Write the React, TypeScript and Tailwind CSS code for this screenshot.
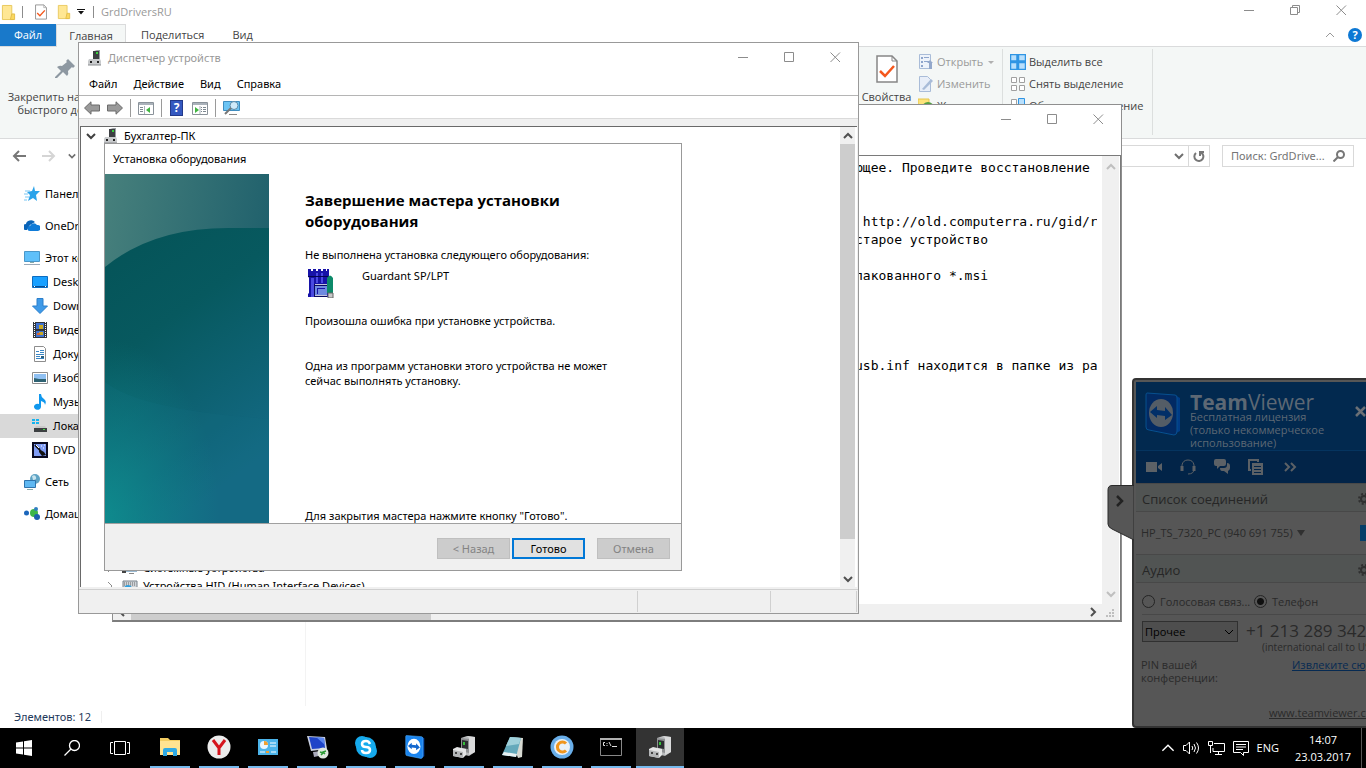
import React, { useState } from "react";

type IconProps = { className?: string };

function Folder({ className = "w-4 h-4" }: IconProps) {
  return (
    <svg viewBox="0 0 16 18" className={className}>
      <path d="M1.5 1.5h10v13l2 2h-12z" fill="#ffe794" stroke="#e8c75a" />
      <path d="M11.5 10.5h3v6h-4.5z" fill="#fbd85f" stroke="#e2bd4a" />
    </svg>
  );
}

function CheckedPage({ className = "w-3 h-4" }: IconProps) {
  return (
    <svg viewBox="0 0 22 28" className={className} fill="none">
      <path d="M1 1h15l5 5v21H1z" fill="#fff" stroke="#868686" strokeWidth="1.5" />
      <path d="M16 1v5h5" stroke="#868686" />
      <path d="M4 16l5 5 9-10" stroke="#f4571c" strokeWidth="2.5" />
    </svg>
  );
}

function Device({ className = "w-4 h-4" }: IconProps) {
  return (
    <svg viewBox="0 0 16 16" className={className}>
      <path d="M6 1h6v9H6z" fill="#3c3f42" />
      <path d="M10 0h3v10h-1V1H7z" fill="#9b9fa3" />
      <path d="M9 2h2v2H9z" fill="#37d23c" />
      <path d="M2 9h11l1 2v4H1v-4z" fill="#c9cbcd" />
      <path d="M1 15h13" stroke="#8a8d90" />
      <path d="M3 11h2v2H3zM10 11h2v2h-2z" fill="#222" />
    </svg>
  );
}

function BigDevice({ className = "w-6 h-6" }: IconProps) {
  return (
    <svg viewBox="0 0 24 24" className={className}>
      <path d="M9 3l6-2 8 1v15l-6 4-8-2z" fill="#b9bbbd" />
      <path d="M15 1l8 1v15l-6 3V3z" fill="#d9dadb" />
      <path d="M9 3l8 1v14l-8-2z" fill="#8f9193" />
      <path d="M10 5l6 1v8l-6-1z" fill="#2c2f31" />
      <path d="M11 7h2v3h-2z" fill="#35c13a" />
      <path d="M1 14l4-2 9 2v6l-3 3-10-2z" fill="#e4e5e6" />
      <path d="M1 15l10 2v6L1 21z" fill="#b4b6b8" />
      <path d="M3 17h2v2H3zM8 18h2v2H8z" fill="#444" />
    </svg>
  );
}

function TeamViewerLogo({ className = "w-6 h-6", dim = false }: IconProps & { dim?: boolean }) {
  return (
    <svg viewBox="0 0 36 44" className={className}>
      <path d="M30 3l5 3v33l-7 4z" fill={dim ? "#013c86" : "#0b4fae"} />
      <path d="M2 1l28 2q2 0 2 3v33q0 4-3 4L4 38q-3 0-3-3V3q0-2 1-2z" fill={dim ? "#022a63" : "#1a84ee"} stroke={dim ? "#07508f" : "#53b2ff"} />
      <ellipse cx="16" cy="21" rx="12" ry="14" fill={dim ? "#545d66" : "#fff"} />
      <path d="M5 20l7-6v4l8 1v-4l7 8-7 5v-4l-8-1v3z" fill={dim ? "#022f68" : "#1267cf"} />
    </svg>
  );
}

function Chevron({ dir, className = "w-[10px] h-[10px]", stroke = 2 }: IconProps & { dir: "up" | "down" | "left" | "right"; stroke?: number }) {
  const d = { up: "M1 7l4-4 4 4", down: "M1 3l4 4 4-4", left: "M7 1L3 5l4 4", right: "M3 1l4 4-4 4" }[dir];
  return (
    <svg viewBox="0 0 10 10" className={`shrink-0 ${className}`} fill="none" stroke="currentColor" strokeWidth={stroke}>
      <path d={d} />
    </svg>
  );
}

function WindowButtons({ restore = false, height = "h-7" }: { restore?: boolean; height?: string }) {
  const shapes = [
    { label: "Свернуть", d: "M0 5.5h10" },
    { label: "Развернуть", d: restore ? "M0.5 2.5h7v7h-7zM2.5 2.5v-2h7v7h-2" : "M0.5 0.5h9v9h-9z" },
    { label: "Закрыть", d: "M0.5 0.5l9.5 9.5M10 0.5L0.5 10" },
  ];
  return (
    <div className="flex ml-auto self-start text-[#8c8c8c]">
      {shapes.map((s) => (
        <button key={s.label} aria-label={s.label} className={`w-[46px] ${height} flex items-center justify-center`}>
          <svg viewBox="0 0 11 11" className="w-[11px] h-[11px]" fill="none" stroke="currentColor">
            <path d={s.d} />
          </svg>
        </button>
      ))}
    </div>
  );
}

/* ---------- explorer ---------- */

const sideIcons: Record<string, React.ReactNode> = {
  star: (
    <>
      <path d="M10 0l1 5h5l-4 4 1 6-4-3-5 3 2-6-3-3 5-1z" fill="#2aa3ea" />
      <path d="M1 5h5M0 8h4M1 11h4M0 14h3" stroke="#79c6f3" />
    </>
  ),
  cloud: (
    <>
      <path d="M2 12a3 3 0 010-6 5 4 0 019-2l-5 3-3 5z" fill="#0a64b8" />
      <path d="M6 13a2.5 2.5 0 010-5 4 4 0 017-1 3 3 0 011 6z" fill="#0f7bd8" />
    </>
  ),
  pc: (
    <>
      <path d="M0.5 1.5h15v10H.5z" fill="#5fc0fa" stroke="#4a97c9" />
      <path d="M6 12h4v1H6z" fill="#8aa" />
      <path d="M0 14.5h16" stroke="#9aa9b8" />
    </>
  ),
  desktop: (
    <>
      <path d="M0.5 2.5h15v11H.5z" fill="#19a0ff" stroke="#0c6cc0" />
      <path d="M1 12.5h14" stroke="#0a4d91" />
      <path d="M2 12.5h1M13 12.5h1" stroke="#fff" />
    </>
  ),
  down: <path d="M5 0.5h6V8h4.5L8 15.5.5 8H5z" fill="#3f9ae8" stroke="#2b7fcb" />,
  video: (
    <>
      <path d="M1 0h14v16H1z" fill="#32363c" />
      <path d="M4 1h8v6H4zM4 9h8v6H4z" fill="#3f72d0" />
      <path d="M7 3h4v4H7zM7 10h4v3H7z" fill="#c9a921" />
      <path d="M5 11h3v2H5z" fill="#d8662b" />
      <path d="M2.5 0v16M13.5 0v16" stroke="#fff" strokeDasharray="1 1" />
    </>
  ),
  doc: (
    <>
      <path d="M2.5.5h9l2 2v13h-11z" fill="#fff" stroke="#8d8d8d" />
      <path d="M4 5.5h3M8 4.5h4M8 6.5h4M4 8.5h8M4 10.5h4M4 12.5h8" stroke="#3a86c4" />
      <path d="M9 10h3v2H9z" fill="#2b5f7e" />
    </>
  ),
  image: (
    <>
      <path d="M.5 2.5h15v11H.5z" fill="#fff" stroke="#8d8d8d" />
      <path d="M2 4h12v8H2z" fill="#8fc0f2" />
      <path d="M2 8l5 1 7 0v3H2z" fill="#2e6272" />
    </>
  ),
  music: <path d="M7 0h2q0 3 3 5t1 6q0-3-4-4v6a3.5 3 0 11-2-3z" fill="#1098ee" />,
  disk: (
    <>
      <path d="M0 1h3v2H0zM4 1h3v2H4zM0 4h3v2H0zM4 4h3v2H4z" fill="#16b3ee" />
      <path d="M4 8h9l2 3H2z" fill="#c9c9c9" />
      <path d="M2 10h13v4H2z" fill="#3d4042" />
      <path d="M11 11h2v1h-2z" fill="#46e04a" />
    </>
  ),
  dvd: (
    <>
      <path d="M1 1h14v14H1z" fill="#7f9cf5" stroke="#0a0a20" strokeWidth="2" />
      <path d="M3 3l5 5" stroke="#111" strokeWidth="2" />
      <path d="M7 7l5 3 2 3-4 1-3-4z" fill="#111" />
      <path d="M4 3l3 3M9 4h1M12 3h1M11 6h1" stroke="#fff" />
    </>
  ),
  net: (
    <>
      <circle cx="11" cy="5" r="5" fill="#5fa3c4" />
      <path d="M8 2q3-2 4 1t-3 3z" fill="#c7e4ee" />
      <path d="M.5 6.5h11v7H.5z" fill="#5fb8f2" stroke="#2f74ac" />
      <path d="M3 15.5h6" stroke="#8aa" />
    </>
  ),
  home: (
    <>
      <circle cx="2.5" cy="7" r="2.5" fill="#1c66bb" />
      <circle cx="10" cy="7" r="4" fill="#3db54a" />
      <circle cx="12" cy="3" r="2" fill="#2f7fc0" />
      <circle cx="13" cy="11" r="3" fill="#1c5fae" />
    </>
  ),
};

type SideItem = { icon: string; label: string; nested?: boolean; active?: boolean };

const sideGroups: SideItem[][] = [
  [{ icon: "star", label: "Панель быстрого доступа" }],
  [{ icon: "cloud", label: "OneDrive" }],
  [
    { icon: "pc", label: "Этот компьютер" },
    { icon: "desktop", label: "Desktop", nested: true },
    { icon: "down", label: "Downloads", nested: true },
    { icon: "video", label: "Видео", nested: true },
    { icon: "doc", label: "Документы", nested: true },
    { icon: "image", label: "Изображения", nested: true },
    { icon: "music", label: "Музыка", nested: true },
    { icon: "disk", label: "Локальный диск", nested: true, active: true },
    { icon: "dvd", label: "DVD RW дисковод", nested: true },
  ],
  [{ icon: "net", label: "Сеть" }],
  [{ icon: "home", label: "Домашняя группа" }],
];

function RibbonRow({ icon, label, muted = false, caret = false }: { icon: React.ReactNode; label: string; muted?: boolean; caret?: boolean }) {
  return (
    <button className={`flex items-center gap-[3px] h-[22px] whitespace-nowrap ${muted ? "text-[#9a9a9a]" : "text-[#444]"}`}>
      <svg viewBox="0 0 16 16" className="w-4 h-4 shrink-0" fill="none">
        {icon}
      </svg>
      {label}
      {caret && <span className="ml-0.5 border-x-[3px] border-x-transparent border-t-[3px] border-t-[#b0b0b0]" />}
    </button>
  );
}

function Explorer() {
  return (
    <div className="flex-1 flex flex-col min-w-0 bg-white text-[#444] font-['Open_Sans',sans-serif]">
      <div className="h-6 flex items-center pl-px pr-0.5 shrink-0">
        <Folder className="w-[15px] h-[17px]" />
        <span className="w-px h-3 bg-[#8c8c8c] ml-1.5" />
        <button aria-label="Свойства" className="ml-3">
          <CheckedPage className="w-3 h-4" />
        </button>
        <button aria-label="Новая папка" className="ml-2.5">
          <Folder className="w-[14px] h-4" />
        </button>
        <svg viewBox="0 0 8 6" className="w-2 h-1.5 ml-1.5">
          <path d="M0 0h8v1H0zM1 2h6L4 5.5z" fill="#111" />
        </svg>
        <span className="w-px h-3 bg-[#8c8c8c] ml-2 mr-[7px]" />
        <span className="text-[#999]">GrdDriversRU</span>
        <WindowButtons restore height="h-5" />
      </div>

      <div className="h-[23px] flex items-stretch shrink-0 border-b border-[#dadbdc]">
        <button className="w-14 bg-[#1979ca] text-white">Файл</button>
        <button className="w-[70px] -mb-px bg-[#f4f7f6] border border-b-0 border-[#dadbdc]">Главная</button>
        <button className="ml-[15px]">Поделиться</button>
        <button className="ml-7">Вид</button>
        <div className="ml-auto mr-1 flex items-center gap-[13px] text-[#999]">
          <Chevron dir="up" stroke={1} />
          <button aria-label="Справка" className="w-[14px] h-[14px] rounded-full bg-[#0d78d4] text-white leading-[14px] font-bold">
            ?
          </button>
        </div>
      </div>

      <div className="h-[92px] flex shrink-0 overflow-hidden bg-[#f4f7f6] border-b border-[#dadbdc]">
        <button className="w-[130px] shrink-0 flex flex-col items-center pt-3 leading-[13px]">
          <svg viewBox="0 0 20 20" className="w-5 h-5 mb-[11px]">
            <path d="M13 0l7 7-2 2-1-1-4 4q1 3-1 5l-4-4-6 6H0v-1l6-6-4-4q3-2 5-1l5-4-1-1z" fill="#8d98a1" />
          </svg>
          Закрепить на панели
          <br />
          быстрого доступа
        </button>
        <div className="w-[728px] shrink-0" />
        <button className="w-[57px] shrink-0 flex flex-col items-center pt-2">
          <CheckedPage className="w-[22px] h-7 mb-1.5" />
          Свойства
        </button>
        <div className="w-[87px] shrink-0 pl-[3px] pt-1">
          <RibbonRow
            muted
            caret
            label="Открыть"
            icon={
              <>
                <path d="M1.5.5h11v14h-11z" fill="#eef3fa" stroke="#a9bcd8" />
                <path d="M3 3h2v2H3zM3 7h2v2H3zM3 11h2v2H3zM6 3h5v1H6zM6 7h5v1H6z" fill="#8fa6cc" />
                <path d="M11 15V9h-2l3-3 3 3h-1v6z" fill="#93a8cb" />
              </>
            }
          />
          <RibbonRow
            muted
            label="Изменить"
            icon={
              <>
                <path d="M1.5.5h8l3 3v12h-11z" fill="#e8eef8" stroke="#a9bcd8" />
                <path d="M4 13L13 3l2 2-9 9z" fill="#a9bcd8" />
              </>
            }
          />
          <RibbonRow
            label="Журнал"
            icon={
              <>
                <path d="M0 1h11v12H0z" fill="#fde37a" stroke="#e6c64c" />
                <circle cx="10" cy="10" r="5" fill="#cfe6c6" stroke="#53a043" strokeWidth="2" />
              </>
            }
          />
        </div>
        <div className="w-px h-[86px] mt-0.5 shrink-0 bg-[#dcdfde]" />
        <div className="w-[149px] shrink-0 pl-[7px] pt-1">
          <RibbonRow
            label="Выделить все"
            icon={<path d="M.5.5h6.5v6.5H.5zM8.5.5h7v6.5h-7zM.5 8.5h6.5v7H.5zM8.5 8.5h7v7h-7z" fill="#b8dffc" stroke="#2f95e4" strokeWidth="1.5" />}
          />
          <RibbonRow
            label="Снять выделение"
            icon={<path d="M1.5 1.5h5v5h-5zM9.5 1.5h5v5h-5zM1.5 9.5h5v5h-5zM9.5 9.5h5v5h-5z" fill="#fff" stroke="#a0a0a0" />}
          />
          <RibbonRow
            label="Обратить выделение"
            icon={
              <>
                <path d="M1.5 1.5h5v5h-5zM9.5 9.5h5v5h-5z" fill="#fff" stroke="#a0a0a0" />
                <path d="M8.5.5h6v7h-6zM.5 8.5h6v7h-6z" fill="#b8dffc" stroke="#2f95e4" />
              </>
            }
          />
        </div>
        <div className="w-px h-[86px] mt-0.5 shrink-0 bg-[#dcdfde]" />
      </div>

      <div className="h-[34px] flex items-center shrink-0 px-3 text-[#6f6f6f]">
        <svg viewBox="0 0 14 12" className="w-[14px] h-3" fill="none" stroke="#777" strokeWidth="2">
          <path d="M7 1L2 6l5 5M2 6h12" />
        </svg>
        <svg viewBox="0 0 14 12" className="w-[14px] h-3 ml-4" fill="none" stroke="#d5d5d5" strokeWidth="2">
          <path d="M7 1l5 5-5 5M12 6H0" />
        </svg>
        <Chevron dir="down" className="w-2 h-2 ml-3" />
        <div className="flex-1 flex h-[22px] ml-8 border border-[#d9d9d9] items-center justify-end">
          <Chevron dir="down" className="w-[10px] h-[10px] mr-1" />
          <button aria-label="Обновить" className="w-[21px] h-5 border-l border-[#d9d9d9] flex items-center justify-center">
            <svg viewBox="0 0 12 12" className="w-3 h-3" fill="none" stroke="#777" strokeWidth="2">
              <path d="M3 3a4.500 4.500 0 105-.5M7 6V2h4" />
            </svg>
          </button>
        </div>
        <label className="w-[132px] h-[22px] ml-3 px-2 border border-[#d9d9d9] flex items-center">
          <input aria-label="Поиск" placeholder="Поиск: GrdDrive..." className="w-[100px] outline-none font-['Noto_Sans',sans-serif] placeholder:text-[#757575]" />
          <svg viewBox="0 0 12 12" className="w-3 h-3 ml-auto shrink-0" fill="none" stroke="#777" strokeWidth="2">
            <circle cx="7.500" cy="4.500" r="3.500" />
            <path d="M5 7l-4.500 4.500" />
          </svg>
        </label>
      </div>

      <div className="flex-1 flex min-h-0">
        <nav className="w-[306px] shrink-0 pt-[9px] flex flex-col gap-2 border-r border-[#f3f3f3] text-black font-['Noto_Sans',sans-serif]">
          {sideGroups.map((group, i) => (
            <div key={i}>
              {group.map((item) => (
                <a
                  key={item.label}
                  href="#"
                  className={`h-6 flex items-center gap-[5px] whitespace-nowrap ${item.nested ? "pl-8" : "pl-6"} ${item.active ? "bg-[#d9d9d9]" : ""}`}
                >
                  <svg viewBox="0 0 16 16" className="w-4 h-4 shrink-0" fill="none">
                    {sideIcons[item.icon]}
                  </svg>
                  {item.label}
                </a>
              ))}
            </div>
          ))}
        </nav>
        <div className="flex-1" />
      </div>

      <div className="h-[22px] shrink-0 flex items-center pl-[14px] text-[#1e395b] font-['Noto_Sans',sans-serif]">
        Элементов: 12
        <span className="w-px h-3 ml-2.5 bg-[#efefef]" />
      </div>
    </div>
  );
}

/* ---------- notepad ---------- */

const noteLines = [
  "ющее. Проведите восстановление",
  "",
  "",
  " http://old.computerra.ru/gid/rtfm",
  "старое устройство",
  "",
  "пакованного *.msi",
  "",
  "",
  "",
  "",
  "usb.inf находится в папке из распак",
];

function Notepad() {
  return (
    <section className="absolute left-28 top-[104px] w-[1010px] h-[518px] flex flex-col bg-white border border-[#8f8f8f] border-b-2 border-b-[#7d7d7d]">
      <div className="flex shrink-0 h-[50px]">
        <WindowButtons />
      </div>
      <div className="flex-1 min-h-0 flex border-t border-r border-[#7a7a7a]">
        <div className="flex-1 min-w-0 flex flex-col">
          <div className="flex-1 min-h-0 flex">
            <pre className="flex-1 min-w-0 overflow-hidden ml-[742px] mr-[5px] pt-[3px] text-[13px] leading-[18px] text-black font-['DejaVu_Sans_Mono','Liberation_Mono',monospace]">
              {noteLines.join("\n")}
            </pre>
          </div>
          <div className="h-4 shrink-0 flex items-center justify-between px-1 bg-[#f0f0f0] text-[#505050]">
            <Chevron dir="left" />
            <div className="w-[300px] h-full mr-auto ml-1 bg-[#cdcdcd]" />
            <Chevron dir="right" />
          </div>
        </div>
        <div className="w-[17px] shrink-0 mr-px py-[6px] flex flex-col items-center justify-between bg-[#f0f0f0] text-[#bfbfbf]">
          <Chevron dir="up" />
          <div className="flex flex-col items-center gap-[10px] -mb-1">
            <Chevron dir="down" />
            <svg viewBox="0 0 9 9" className="w-[9px] h-[9px]">
              <path d="M6 0h2v2H6zM3 3h2v2H3zM6 3h2v2H6zM0 6h2v2H0zM3 6h2v2H3zM6 6h2v2H6z" fill="#bfbfbf" />
            </svg>
          </div>
        </div>
      </div>
    </section>
  );
}

/* ---------- device manager ---------- */

function Divider() {
  return <span className="w-px h-[18px] bg-[#9a9a9a]" />;
}

function Arrow({ flip = false }: { flip?: boolean }) {
  return (
    <svg viewBox="0 0 16 14" className={`w-4 h-[14px] ${flip ? "-scale-x-100" : ""}`}>
      <path d="M.5 7L7 .8V4h8.500v6H7v3.200z" fill="#9a9a9a" stroke="#6b6b6b" />
    </svg>
  );
}

function Pane({ flip = false }: { flip?: boolean }) {
  return (
    <svg viewBox="0 0 16 13" className="w-4 h-[13px]">
      <path d="M.5.5h15v12H.5z" fill="#fff" stroke="#8a929a" />
      <path d="M1 1h14v2H1z" fill="#aab2ba" />
      <path d={flip ? "M9 5h1v1H9zM11 5h3v1h-3zM9 7h1v1H9zM11 7h3v1h-3zM9 9h1v1H9zM11 9h3v1h-3z" : "M2 5h3v1H2zM2 7h3v1H2zM2 9h3v1H2z"} fill="#7c8790" />
      <path d={flip ? "M8 4v8" : "M6.500 4v8"} stroke="#aab2ba" />
      <path d={flip ? "M3 5l4 3-4 3z" : "M12 5L8 8l4 3z"} fill="#3fb53f" />
    </svg>
  );
}

function TreeRow({ icon, label, root = false }: { icon: React.ReactNode; label: string; root?: boolean }) {
  return (
    <div className={`h-[18px] shrink-0 flex items-center whitespace-nowrap text-black ${root ? "pl-[5px]" : "pl-6"}`}>
      <Chevron dir={root ? "down" : "right"} stroke={root ? 2 : 1} className={root ? "w-[10px] h-[10px] text-[#404040] mr-[7px]" : "w-[10px] h-[10px] text-[#8c8c8c] mr-[7px]"} />
      {icon}
      <span className="ml-[5px]">{label}</span>
    </div>
  );
}

function Wizard() {
  const btn = "w-[73px] h-[21px] text-center leading-[17px]";
  const off = `${btn} bg-[#cccccc] border border-[#bfbfbf] text-[#838383]`;
  return (
    <section className="absolute left-[104px] top-[143px] w-[578px] h-[428px] flex flex-col bg-white border border-[#999] text-black">
      <h2 className="h-[30px] shrink-0 pl-2 leading-[30px]">Установка оборудования</h2>
      <div className="flex-1 min-h-0 flex">
        <svg viewBox="0 0 164 349" preserveAspectRatio="none" className="w-[164px] h-full shrink-0">
          <defs>
            <linearGradient id="sky" x1="0" y1="0" x2="1" y2="0.3">
              <stop offset="0" stopColor="#47807c" />
              <stop offset="1" stopColor="#1f606c" />
            </linearGradient>
            <linearGradient id="sea" x1="0" y1="0" x2="0.4" y2="1">
              <stop offset="0" stopColor="#045357" />
              <stop offset="0.4" stopColor="#07595f" />
              <stop offset="1" stopColor="#146a85" />
            </linearGradient>
            <radialGradient id="glow" cx="0" cy="0.98" r="0.7">
              <stop offset="0" stopColor="#0e9391" stopOpacity="0.8" />
              <stop offset="1" stopColor="#0e8a8c" stopOpacity="0" />
            </radialGradient>
          </defs>
          <path d="M0 0h164v349H0z" fill="url(#sky)" />
          <path d="M0 93Q50 52 130 54h34v295H0z" fill="url(#sea)" />
          <path d="M0 208Q35 236 164 245v104H0z" fill="#126c80" fillOpacity="0.2" />
          <path d="M0 93h164v256H0z" fill="url(#glow)" />
        </svg>
        <div className="flex-1 flex flex-col pl-9 pr-10 pt-4 leading-[15px]">
          <h1 className="text-[15px] leading-[21px] font-bold font-['Open_Sans',sans-serif]">
            Завершение мастера установки
            <br />
            оборудования
          </h1>
          <p className="mt-[15px] whitespace-nowrap">Не выполнена установка следующего оборудования:</p>
          <div className="flex mt-[6px] gap-7 h-[30px]">
            <svg viewBox="0 0 26 29" className="w-[26px] h-[29px] ml-[3px] mt-px">
              <path d="M0 0h3v2h2V0h3v2h2V0h3v2h2V0h3v2h1V0h2v7l-1 2v19H0v-3l1-1V9L0 7z" fill="#1713a8" />
              <path d="M3 9h3v19H3zM8 4h2v10H8zM13 4h2v10h-2z" fill="#4a4ae0" />
              <path d="M0 7h21v1H0z" fill="#050550" />
              <path d="M6 15h13v13H6z" fill="#0a0a60" />
              <path d="M7 17h12v9H7z" fill="#6f8ae0" />
              <path d="M7 15h12v1H7zM7 26h12v1H7z" fill="#c4c4dc" />
              <path d="M9 19h8v1h-7v5H9z" fill="#1713a8" />
              <path d="M19 9q3-5 6 0v15h-6z" fill="#0d8a6a" />
              <path d="M20 24h5v5h-5z" fill="#c8c8c8" stroke="#666" />
            </svg>
            <span>Guardant SP/LPT</span>
          </div>
          <p className="mt-[15px]">Произошла ошибка при установке устройства.</p>
          <p className="mt-[30px]">
            Одна из программ установки этого устройства не может
            <br />
            сейчас выполнять установку.
          </p>
          <p className="mt-auto">Для закрытия мастера нажмите кнопку "Готово".</p>
        </div>
      </div>
      <div className="h-[47px] shrink-0 border-t border-[#a0a0a0] bg-[#f0f0f0] pr-[11px] pt-[3px] flex items-center justify-end">
        <button disabled className={off}>
          &lt; Назад
        </button>
        <button className={`${btn} ml-0.5 bg-[#e1e1e1] border-2 border-[#0078d7]`}>Готово</button>
        <button disabled className={`${off} ml-3`}>
          Отмена
        </button>
      </div>
    </section>
  );
}

function DeviceManager() {
  return (
    <section className="absolute left-[78px] top-[42px] w-[781px] h-[572px] flex flex-col bg-white border border-[#999] text-black">
      <div className="h-[30px] flex items-center pl-2 shrink-0">
        <Device className="w-4 h-4" />
        <h2 className="ml-[5px] text-[#999]">Диспетчер устройств</h2>
        <WindowButtons />
      </div>
      <div className="h-[23px] shrink-0 flex items-center pl-[10px] gap-4 border-b border-[#b5b5b5]">
        {["Файл", "Действие", "Вид", "Справка"].map((m) => (
          <button key={m}>{m}</button>
        ))}
      </div>
      <div className="h-[23px] shrink-0 flex items-center gap-[7px] pl-[5px] pt-0.5 border-b border-[#dadada]">
        <Arrow />
        <Arrow flip />
        <Divider />
        <Pane />
        <Divider />
        <button aria-label="Справка" className="w-[13px] h-4 ml-px bg-[#3458c0] border border-[#23398a] text-white font-bold text-[12px] leading-[14px]">
          ?
        </button>
        <span className="ml-0.5 flex">
          <Pane flip />
        </span>
        <Divider />
        <svg viewBox="0 0 17 16" className="w-[17px] h-4">
          <path d="M.5 1.5h16v9H.5z" fill="#6cc4f4" stroke="#3f8dc0" />
          <circle cx="11" cy="5.5" r="4" fill="#cfeafa" stroke="#5d8ba8" />
          <path d="M8 8l-6 6" stroke="#777" strokeWidth="2" />
          <path d="M6 14.5h8" stroke="#888" />
        </svg>
      </div>
      <div className="flex-1 min-h-0 pt-[7px] pb-0.5 px-px bg-[#f0f0f0]">
        <div className="h-full flex bg-white border-t border-l border-[#696969]">
          <div className="flex-1 min-w-0 overflow-hidden flex flex-col">
            <TreeRow root label="Бухгалтер-ПК" icon={<Device className="w-4 h-4" />} />
            <div className="h-[414px] shrink-0" />
            <TreeRow
              label="Системные устройства"
              icon={
                <svg viewBox="0 0 16 16" className="w-4 h-4">
                  <path d="M3 2h12v9H3z" fill="#58b4ec" stroke="#3576a5" />
                  <path d="M0 4h4v9H0z" fill="#444" />
                  <path d="M7 13h5v1H7z" fill="#888" />
                </svg>
              }
            />
            <TreeRow
              label="Устройства HID (Human Interface Devices)"
              icon={
                <svg viewBox="0 0 16 16" className="w-4 h-4">
                  <path d="M1 3h14v9H1z" fill="#cfd4d9" stroke="#78828c" />
                  <path d="M2 5h12M2 7h12" stroke="#666" strokeDasharray="1 1" />
                  <circle cx="6" cy="11" r="4" fill="#2d9fe0" />
                </svg>
              }
            />
          </div>
          <div className="w-[15px] mr-0.5 shrink-0 flex flex-col items-center bg-[#f0f0f0] text-[#505050]">
            <Chevron dir="up" className="w-[10px] h-[10px] mt-1 mb-[3px]" />
            <div className="w-full h-[395px] bg-[#cdcdcd]" />
            <Chevron dir="down" className="w-[10px] h-[10px] mt-auto mb-[3px]" />
          </div>
        </div>
      </div>
      <div className="h-6 shrink-0 flex justify-end border-t border-[#d0d0d0] bg-[#f0f0f0] py-px pr-px">
        <span className="w-[133px] border-l border-[#d0d0d0]" />
        <span className="w-[87px] border-x border-[#d0d0d0]" />
      </div>
    </section>
  );
}

/* ---------- teamviewer ---------- */

function SectionTitle({ children }: { children: React.ReactNode }) {
  return (
    <div className="h-[29px] shrink-0 flex items-center bg-[#515453] border-y border-[#484848] pl-1.5 pr-[18px] pt-0.5">
      <h3 className="text-[13px] text-[#262626]">{children}</h3>
      <svg viewBox="0 0 12 12" className="w-3 h-3 ml-auto" fill="none" stroke="#303030">
        <circle cx="6" cy="6" r="3" strokeWidth="2" />
        <circle cx="6" cy="6" r="5" strokeWidth="2" strokeDasharray="2 2" />
      </svg>
    </div>
  );
}

function TeamViewer() {
  const [audio, setAudio] = useState("phone");
  const radio = "appearance-none w-[13px] h-[13px] m-0 shrink-0 rounded-full border border-[#242424] checked:bg-[radial-gradient(#101010_3px,transparent_4px)]";
  return (
    <aside className="absolute right-[-26px] bottom-10 h-[350px] w-[260px] flex flex-col rounded-tl rounded-bl bg-[#565656] border-2 border-[#333] p-0.5 text-[#2a2a2a] font-['Open_Sans',sans-serif]">
      <svg viewBox="0 0 27 57" className="absolute left-[-27px] top-[105px] w-[27px] h-[57px]">
        <path d="M27 .5H5Q1 .5 1 5v34q0 3 4 5l22 11z" fill="#565656" stroke="#2b2b2b" />
        <path d="M10 11l5 5-5 5" fill="none" stroke="#222" strokeWidth="2.5" />
      </svg>
      <div className="h-[68px] shrink-0 flex bg-[#02294f]">
        <TeamViewerLogo dim className="w-9 h-11 ml-[9px] mt-2.5 shrink-0" />
        <div className="ml-[9px] pt-3 text-[#5d6874]">
          <h2 className="text-[21px] leading-[16px] whitespace-nowrap">
            <b>Team</b>Viewer
          </h2>
          <p className="leading-[13px] whitespace-nowrap">
            Бесплатная лицензия
            <br />
            (только некоммерческое
            <br />
            использование)
          </p>
        </div>
        <svg viewBox="0 0 11 11" className="w-[11px] h-[11px] ml-auto mr-[22px] mt-6 shrink-0" stroke="#6a6f75" strokeWidth="2.5">
          <path d="M1 1l9 9M10 1l-9 9" />
        </svg>
      </div>
      <div className="h-[33px] shrink-0 flex items-center gap-[18px] pl-[10px] bg-[#022448] border-t border-[#05345f] text-[#5c6166]">
        <svg viewBox="0 0 16 16" className="w-4 h-4" fill="currentColor">
          <path d="M0 3h11v10H0zM12 7l4-3v8l-4-3z" />
        </svg>
        <svg viewBox="0 0 16 16" className="w-4 h-4" fill="none" stroke="currentColor" strokeWidth="2">
          <path d="M2 8V6q1-5 6-5t6 5v2M14 10q0 5-6 5" strokeWidth="1" />
          <path d="M2 7v5M14 7v5" strokeWidth="3" />
        </svg>
        <svg viewBox="0 0 16 16" className="w-4 h-4" fill="currentColor">
          <path d="M2 0h8q2 0 2 2v3q0 2-2 2H6L3 10V7H2Q0 7 0 5V2q0-2 2-2zM13 4q3 0 3 3v2q0 2-2 3v3l-4-3H8q-2 0-2-3h4q3 0 3-3z" />
        </svg>
        <svg viewBox="0 0 16 16" className="w-4 h-4" fill="none">
          <path d="M3 11H1V1h9v2" stroke="currentColor" strokeWidth="2" />
          <path d="M4 4h11v12H4z" fill="currentColor" />
          <path d="M6 7.5h7M6 10.5h7M6 13.5h7" stroke="#022448" />
        </svg>
        <svg viewBox="0 0 16 16" className="w-4 h-4" fill="none" stroke="currentColor" strokeWidth="2">
          <path d="M3 4l4 4-4 4M9 4l4 4-4 4" />
        </svg>
      </div>
      <SectionTitle>Список соединений</SectionTitle>
      <div className="h-[42px] shrink-0 flex items-center pl-[5px]">
        HP_TS_7320_PC (940 691 755)
        <span className="ml-1 border-x-[4px] border-x-transparent border-t-[6px] border-t-[#303030]" />
        <span className="ml-auto mr-1 w-6 h-4 bg-[#063e68]" />
      </div>
      <SectionTitle>Аудио</SectionTitle>
      <div className="h-8 shrink-0 ml-1.5 pt-1.5 flex items-center border-b border-[#484848]">
        <label className="flex items-center gap-[5px] w-28 whitespace-nowrap">
          <input type="radio" name="audio" checked={audio === "voip"} onChange={() => setAudio("voip")} className={radio} />
          Голосовая связ...
        </label>
        <label className="flex items-center gap-[5px]">
          <input type="radio" name="audio" checked={audio === "phone"} onChange={() => setAudio("phone")} className={radio} />
          Телефон
        </label>
      </div>
      <div className="flex pl-1.5 pt-1.5 shrink-0">
        <div className="relative w-24 h-[21px] shrink-0">
          <select aria-label="Страна" className="appearance-none w-full h-full pl-0.5 text-black bg-[#4e4e4e] border border-[#303030]">
            <option>Прочее</option>
          </select>
          <Chevron dir="down" stroke={1} className="absolute right-1 top-1.5 w-[10px] h-[10px] text-black pointer-events-none" />
        </div>
        <div className="ml-2 whitespace-nowrap">
          <div className="text-[17px] leading-[20px]">+1 213 289 3427</div>
          <div className="pl-4 text-[10px] leading-[13px]">(international call to USA)</div>
        </div>
      </div>
      <div className="flex items-start pl-[5px] pt-1 leading-[13px]">
        <span className="w-[151px] shrink-0">
          PIN вашей
          <br />
          конференции:
        </span>
        <a href="#" className="underline whitespace-nowrap text-[#062a52]">
          Извлеките сюда
        </a>
      </div>
      <a href="#" className="mt-auto mb-1 ml-[133px] leading-[14px] underline">
        www.teamviewer.com
      </a>
    </aside>
  );
}

/* ---------- taskbar ---------- */

const apps = [
  {
    name: "Проводник",
    icon: (
      <svg viewBox="0 0 24 24" className="w-6 h-6">
        <path d="M2 3h8l2 2h10v15H2z" fill="#f3cd62" />
        <path d="M2 6h20v14H2z" fill="#ffe391" />
        <path d="M5 21v-6q0-2 2-2h10q2 0 2 2v6h-4v-4H9v4z" fill="#2fa9e4" />
      </svg>
    ),
  },
  {
    name: "Яндекс",
    icon: (
      <svg viewBox="0 0 24 24" className="w-6 h-6">
        <circle cx="12" cy="12" r="11.5" fill="#ececec" />
        <path d="M6 5l6 8 6-8M12 12v8" fill="none" stroke="#d5141d" strokeWidth="3" />
      </svg>
    ),
  },
  {
    name: "Панель управления",
    icon: (
      <svg viewBox="0 0 24 24" className="w-6 h-6">
        <path d="M2 4h20v16H2z" fill="#4cb4ea" />
        <circle cx="8" cy="10" r="4" fill="#e8f6ff" />
        <path d="M8 10V6a4 4 0 014 4z" fill="#f0a030" />
        <path d="M14 8h6M14 11h6M4 17h5M15 17h5" stroke="#fff" />
        <path d="M10 17h3" stroke="#f0a030" strokeWidth="2" />
      </svg>
    ),
  },
  {
    name: "Удаленный рабочий стол",
    icon: (
      <svg viewBox="0 0 24 24" className="w-6 h-6">
        <path d="M2 1l18 1 2 12-16 2z" fill="#c8cfe0" />
        <path d="M4 2l15 1 1 10-13 1z" fill="#1e44c8" />
        <path d="M11 2l8 1 1 7z" fill="#5b86ee" />
        <path d="M8 17l8-1 2 4-9 2z" fill="#aab" />
        <circle cx="18" cy="18" r="5.5" fill="#dfe8df" />
        <path d="M15 17l3 1-2 2M21 16l-3 1 2 2" stroke="#2b9a34" fill="none" strokeWidth="1.5" />
      </svg>
    ),
  },
  {
    name: "Skype",
    icon: (
      <svg viewBox="0 0 24 24" className="w-6 h-6">
        <circle cx="8" cy="8" r="7" fill="#16aaed" />
        <circle cx="16" cy="16" r="7" fill="#16aaed" />
        <circle cx="12" cy="12" r="10" fill="#16aaed" />
        <path d="M16 9q-1-3-4-3-4 0-4 3t4 3 4 3-4 3-4-3" fill="none" stroke="#fff" strokeWidth="2.5" />
      </svg>
    ),
  },
  { name: "TeamViewer", icon: <TeamViewerLogo className="w-5 h-6" /> },
  { name: "Устройства", icon: <BigDevice /> },
  {
    name: "Блокнот",
    icon: (
      <svg viewBox="0 0 24 24" className="w-6 h-6">
        <path d="M9 2l13 1-1 19-4 1z" fill="#d7d9d2" />
        <path d="M9 2l11 1-5 19L1 20z" fill="#64a9bb" />
        <path d="M9 2l11 1-2 6L5 11z" fill="#9fd0da" />
        <path d="M1 20l14 2 1-3L3 17z" fill="#e9f1f2" />
      </svg>
    ),
  },
  {
    name: "Браузер",
    icon: (
      <svg viewBox="0 0 24 24" className="w-6 h-6">
        <circle cx="12" cy="12" r="11.5" fill="#69aee9" />
        <circle cx="12" cy="12" r="8" fill="#e9f1f8" />
        <path d="M16 8.5a5 5 0 100 7" fill="none" stroke="#f0961e" strokeWidth="3" />
      </svg>
    ),
  },
  {
    name: "Командная строка",
    icon: (
      <svg viewBox="0 0 24 20" className="w-6 h-5">
        <path d="M1.5 1.5h21v17h-21z" fill="#000" stroke="#888" />
        <path d="M1 1h22v2H1z" fill="#b0b0b0" />
        <path d="M6 5.5H4.500v3H6M8 6v1M8 8v1M10 5l2 4M13 9.5h5" stroke="#e0e0e0" fill="none" />
      </svg>
    ),
  },
  { name: "Диспетчер устройств", icon: <BigDevice />, active: true },
];

function Taskbar() {
  const sys = "w-12 h-full flex items-center justify-center";
  return (
    <footer className="relative h-10 shrink-0 flex items-stretch bg-black text-white font-['Open_Sans',sans-serif]">
      <button aria-label="Пуск" className={sys}>
        <svg viewBox="0 0 16 16" className="w-4 h-4" fill="#fff">
          <path d="M0 2.5L7 1.5v6H0zM8 1.3L16 0v7.5H8zM0 8.5h7v6L0 13.5zM8 8.5h8V16l-8-1.2z" />
        </svg>
      </button>
      <button aria-label="Поиск" className={sys}>
        <svg viewBox="0 0 16 16" className="w-4 h-4" fill="none" stroke="#fff" strokeWidth="1.3">
          <circle cx="10.5" cy="5.5" r="5" />
          <path d="M7 9l-6.5 6.5" />
        </svg>
      </button>
      <button aria-label="Представление задач" className={sys}>
        <svg viewBox="0 0 20 14" className="w-5 h-[14px]" fill="none" stroke="#fff">
          <path d="M4.5.5h11v13h-11zM3 1.5H.5v11H3M17 1.5h2.5v11H17" />
        </svg>
      </button>
      <div className="flex gap-px ml-0.5">
        {apps.map((a) => (
          <button key={a.name} aria-label={a.name} className={`w-12 flex flex-col items-center ${a.active ? "bg-[#333]" : ""}`}>
            <span className="flex-1 flex items-center">{a.icon}</span>
            <span className={`h-0.5 bg-[#76b9ed] ${a.active ? "w-full" : "w-10"}`} />
          </button>
        ))}
      </div>
      <div className="ml-auto flex items-center gap-2 pr-1">
        <Chevron dir="up" stroke={1} className="w-[14px] h-[14px]" />
        <svg viewBox="0 0 17 16" className="w-[17px] h-4" fill="none" stroke="#fff">
          <path d="M.5 5.5H3L6.5 2v12L3 10.5H.5zM9 6q1.5 2 0 4M11 4q3 4 0 8M13.5 2.5q4 5.5 0 11" />
        </svg>
        <svg viewBox="0 0 17 16" className="w-[17px] h-4" fill="none" stroke="#fff">
          <path d="M6 3.5h10.5v8H5V8M10.5 11.5v3M7 14.5h7M.5 1.5h4v4h-4zM2.5 6v7" />
        </svg>
        <svg viewBox="0 0 16 16" className="w-4 h-4" fill="none" stroke="#fff">
          <path d="M.5 1.5h15v11h-5v3l-3-3h-7zM3 4.5h10M3 7h10M3 9.5h7" />
        </svg>
        <span>ENG</span>
        <div className="w-[60px] ml-1.5 text-center leading-[17px]">
          14:07
          <br />
          23.03.2017
        </div>
        <span className="w-px h-full bg-[#555]" />
      </div>
    </footer>
  );
}

export default function App() {
  return (
    <div className="relative min-h-screen overflow-hidden flex flex-col bg-white text-[11px] leading-[16px] font-['Noto_Sans',sans-serif]">
      <Explorer />
      <Notepad />
      <DeviceManager />
      <Wizard />
      <TeamViewer />
      <Taskbar />
    </div>
  );
}
